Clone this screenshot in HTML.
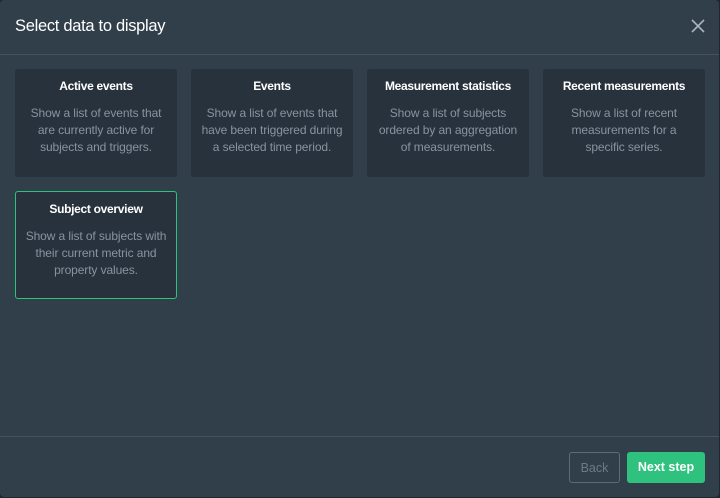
<!DOCTYPE html><html><head><style>
body{margin:0;width:720px;height:498px;background:#1e262e;font-family:"Liberation Sans",sans-serif;overflow:hidden}
.m{position:absolute;left:0;top:0;width:719px;height:497px;background:#313f4b;border-radius:4px}
.h{position:absolute;left:15px;top:17px;color:#fff;font-size:16.5px;letter-spacing:-0.3px}
.x{position:absolute;left:690px;top:18px;width:16px;height:16px}
.l{position:absolute;left:0;width:719px;height:1px;background:#45535f}
.c{position:absolute;width:162px;height:108px;background:#28323d;border-radius:3px;text-align:center;box-sizing:border-box}
.c b{display:block;color:#fff;font-size:12px;margin-top:10px;letter-spacing:-0.3px}
.c p{margin:12px 9px 0;color:#8794a0;font-size:12px;line-height:17px;letter-spacing:-0.1px}
.btn{position:absolute;top:452px;height:31px;border-radius:3px;font-size:12.5px;line-height:31px;text-align:center;box-sizing:border-box}
</style></head><body><div class="m">
<div class="h">Select data to display</div>
<svg class="x" viewBox="0 0 16 16"><path d="M2 2L14 14M14 2L2 14" stroke="#aab3bb" stroke-width="1.6"/></svg>
<div class="l" style="top:54px"></div>
<div class="c" style="left:15px;top:69px"><b>Active events</b><p>Show a list of events that are currently active for subjects and triggers.</p></div>
<div class="c" style="left:191px;top:69px"><b>Events</b><p>Show a list of events that have been triggered during a selected time period.</p></div>
<div class="c" style="left:367px;top:69px"><b>Measurement statistics</b><p>Show a list of subjects ordered by an aggregation of measurements.</p></div>
<div class="c" style="left:543px;top:69px"><b>Recent measurements</b><p>Show a list of recent measurements for a specific series.</p></div>
<div class="c" style="left:15px;top:191px;border:1px solid #2ec27e"><b style="margin-top:10px">Subject overview</b><p>Show a list of subjects with their current metric and property values.</p></div>
<div class="l" style="top:436px"></div>
<div class="btn" style="left:569px;width:51px;border:1px solid #5c6b78;color:#6c7a87">Back</div>
<div class="btn" style="left:627px;width:78px;background:#2ec27e;color:#fff;font-weight:bold">Next step</div>
</div></body></html>
